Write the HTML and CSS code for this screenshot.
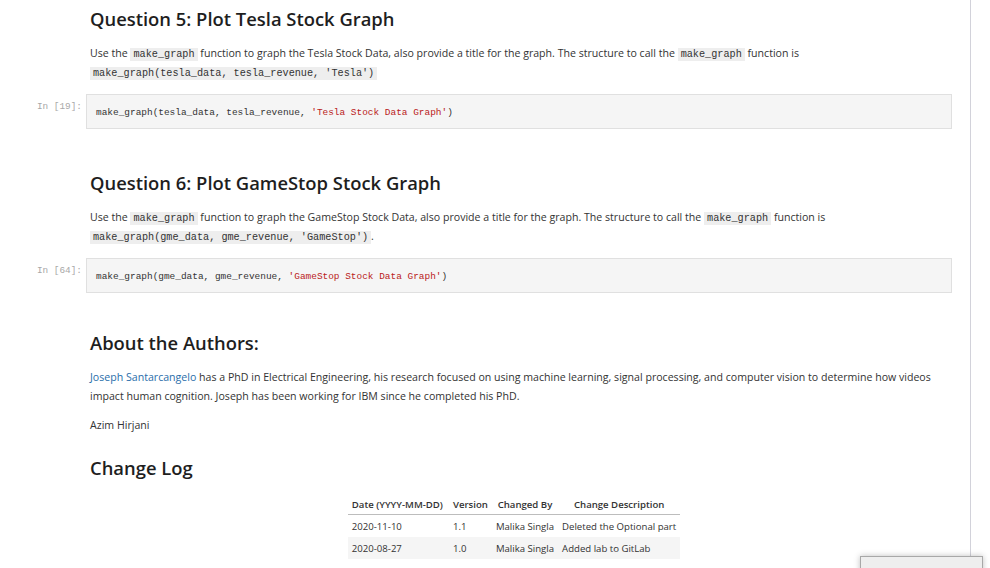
FILE: index.html
```html
<!DOCTYPE html>
<html>
<head>
<meta charset="utf-8">
<link rel="stylesheet" href="styles.css">
</head>
<body>
<div class="notebook">
  <div class="cell md first">
    <h2>Question 5: Plot Tesla Stock Graph</h2>
    <p>Use the <code>make_graph</code> function to graph the Tesla Stock Data, also provide a title for the graph. The structure to call the <code>make_graph</code> function is<br><code>make_graph(tesla_data, tesla_revenue, 'Tesla')</code></p>
  </div>
  <div class="cell code">
    <div class="prompt">In&nbsp;[19]:</div>
    <div class="input"><pre>make_graph(tesla_data, tesla_revenue, <span class="s">'Tesla Stock Data Graph'</span>)</pre></div>
  </div>
  <div class="cell md q6">
    <h2>Question 6: Plot GameStop Stock Graph</h2>
    <p>Use the <code>make_graph</code> function to graph the GameStop Stock Data, also provide a title for the graph. The structure to call the <code>make_graph</code> function is<br><code>make_graph(gme_data, gme_revenue, 'GameStop')</code>.</p>
  </div>
  <div class="cell code">
    <div class="prompt">In&nbsp;[64]:</div>
    <div class="input"><pre>make_graph(gme_data, gme_revenue, <span class="s">'GameStop Stock Data Graph'</span>)</pre></div>
  </div>
  <div class="cell md authors">
    <h2>About the Authors:</h2>
    <p><a href="#">Joseph Santarcangelo</a> has a PhD in Electrical Engineering, his research focused on using machine learning, signal processing, and computer vision to determine how videos impact human cognition. Joseph has been working for IBM since he completed his PhD.</p>
    <p class="name">Azim Hirjani</p>
  </div>
  <div class="cell md changelog">
    <h2>Change Log</h2>
    <table>
      <thead>
        <tr><th class="l">Date (YYYY-MM-DD)</th><th>Version</th><th>Changed By</th><th>Change Description</th></tr>
      </thead>
      <tbody>
        <tr><td>2020-11-10</td><td>1.1</td><td>Malika Singla</td><td>Deleted the Optional part</td></tr>
        <tr class="alt"><td>2020-08-27</td><td>1.0</td><td>Malika Singla</td><td>Added lab to GitLab</td></tr>
      </tbody>
    </table>
  </div>
</div>
<div class="popup"></div>
</body>
</html>
```
FILE: styles.css
```css
html, body {
  margin: 0;
  padding: 0;
  background: #fff;
  height: 568px;
  overflow: hidden;
}
body {
  font-family: "Open Sans", "Noto Sans", sans-serif;
  color: #333;
  position: relative;
}
.notebook {
  width: 970px;
  height: 556px;
  border-right: 1px solid #d2d2da;
}
.cell {
  padding-left: 90px;
  padding-right: 18px;
}
.cell.code {
  padding-left: 0;
  display: flex;
  align-items: flex-start;
  margin-top: 12px;
}
h2 {
  font-size: 18.4px;
  font-weight: 600;
  color: #1e1e1e;
  margin: 0;
  line-height: 26px;
}
.first {
  padding-top: 6px;
}
p {
  font-size: 10.6px;
  line-height: 19px;
  margin: 12px 0 0 0;
  color: #333;
}
code {
  font-family: "Liberation Mono", monospace;
  font-size: 10.2px;
  line-height: 1;
  background: #eee;
  padding: 1px 3px;
}
.prompt {
  width: 82px;
  padding-right: 4px;
  text-align: right;
  font-family: "Liberation Mono", monospace;
  font-size: 9.4px;
  color: #a8a8a8;
  padding-top: 7px;
}
.input {
  flex: 1;
  background: #f5f5f5;
  border: 1px solid #e0e0e0;
  height: 33px;
  display: flex;
  align-items: center;
}
pre {
  margin: 0;
  padding-left: 9px;
  padding-top: 1px;
  font-family: "Liberation Mono", monospace;
  font-size: 9.45px;
  color: #333;
}
.s { color: #ba2121; }
.q6 { margin-top: 41px; }
.authors { margin-top: 37px; }
.authors .name { margin-top: 10px; }
.changelog { margin-top: 20px; }
a { color: #296eaa; text-decoration: none; }
table {
  margin: 13px auto 0 auto;
  border-collapse: collapse;
  font-size: 9.6px;
  color: #333;
  position: relative;
  left: -7px;
}
th {
  font-weight: 600;
  text-align: center;
  padding: 0 4px;
  height: 20px;
  border-bottom: 1px solid #bdbdbd;
  vertical-align: middle;
}
th.l { text-align: left; }
td {
  padding: 0 4px;
  height: 22px;
  text-align: left;
  vertical-align: middle;
}
td:first-child, th:first-child { padding-left: 4px; padding-right: 6px; }
td:nth-child(2) { padding-right: 12px; }
tr.alt td { background: #f5f5f5; }
.popup {
  position: absolute;
  left: 860px;
  top: 556px;
  width: 121px;
  height: 20px;
  background: #eee;
  border: 1px solid #a8a8a8;
  box-shadow: 0 0 6px rgba(0,0,0,0.25);
}
```
